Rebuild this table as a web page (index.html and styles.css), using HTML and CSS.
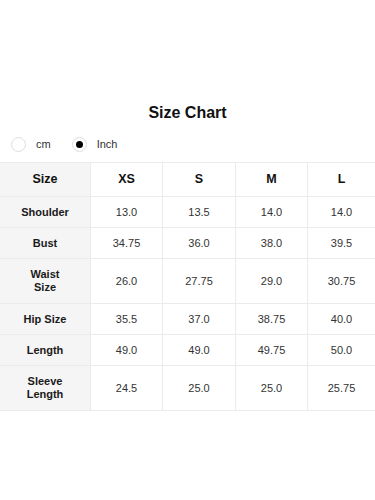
FILE: index.html
```html
<!DOCTYPE html>
<html lang="en">
<head>
<meta charset="utf-8">
<title>Size Chart</title>
<link rel="stylesheet" href="styles.css">
</head>
<body>
<h1 class="title">Size Chart</h1>
<div class="units">
  <span class="radio"></span><span class="unit-label">cm</span>
  <span class="radio checked"></span><span class="unit-label">Inch</span>
</div>
<div class="chart">
  <div class="cell head label">Size</div>
  <div class="cell head">XS</div>
  <div class="cell head">S</div>
  <div class="cell head">M</div>
  <div class="cell head">L</div>

  <div class="cell label">Shoulder</div>
  <div class="cell">13.0</div><div class="cell">13.5</div><div class="cell">14.0</div><div class="cell">14.0</div>

  <div class="cell label">Bust</div>
  <div class="cell">34.75</div><div class="cell">36.0</div><div class="cell">38.0</div><div class="cell">39.5</div>

  <div class="cell label">Waist<br>Size</div>
  <div class="cell">26.0</div><div class="cell">27.75</div><div class="cell">29.0</div><div class="cell">30.75</div>

  <div class="cell label">Hip Size</div>
  <div class="cell">35.5</div><div class="cell">37.0</div><div class="cell">38.75</div><div class="cell">40.0</div>

  <div class="cell label">Length</div>
  <div class="cell">49.0</div><div class="cell">49.0</div><div class="cell">49.75</div><div class="cell">50.0</div>

  <div class="cell label">Sleeve<br>Length</div>
  <div class="cell">24.5</div><div class="cell">25.0</div><div class="cell">25.0</div><div class="cell">25.75</div>
</div>
</body>
</html>
```
FILE: styles.css
```css
html, body {
  margin: 0;
  padding: 0;
  background: #fff;
}
body {
  font-family: "Liberation Sans", Arial, sans-serif;
  color: #222;
  width: 375px;
}
.title {
  margin: 103px 0 0;
  height: 20px;
  line-height: 20px;
  font-size: 16px;
  font-weight: bold;
  text-align: center;
  color: #111;
}
.units {
  margin-top: 13px;
  height: 16px;
  display: flex;
  align-items: center;
  padding-left: 11px;
}
.radio {
  width: 15px;
  height: 15px;
  box-sizing: border-box;
  border: 1px solid #dedede;
  border-radius: 50%;
  background: #fff;
  display: flex;
  align-items: center;
  justify-content: center;
  flex: none;
}
.radio.checked::after {
  content: "";
  width: 7px;
  height: 7px;
  border-radius: 50%;
  background: #000;
}
.unit-label {
  font-size: 11px;
  color: #333;
  margin-left: 10px;
  margin-right: 21px;
}
.chart {
  margin-top: 10px;
  display: grid;
  grid-template-columns: 90px 71px 72px 71px 1fr;
  grid-template-rows: 33px 30px 30px 44px 30px 30px 44px;
  gap: 1px;
  background: #ebebeb;
  border-top: 1px solid #ebebeb;
  border-bottom: 1px solid #ebebeb;
}
.cell {
  background: #fff;
  display: flex;
  align-items: center;
  justify-content: center;
  text-align: center;
  font-size: 11px;
  line-height: 13px;
  color: #333;
}
.cell.label {
  background: #f5f5f5;
  font-weight: bold;
  font-size: 11px;
  color: #1a1a1a;
}
.cell.head {
  font-weight: bold;
  font-size: 12.5px;
  color: #111;
}
```
